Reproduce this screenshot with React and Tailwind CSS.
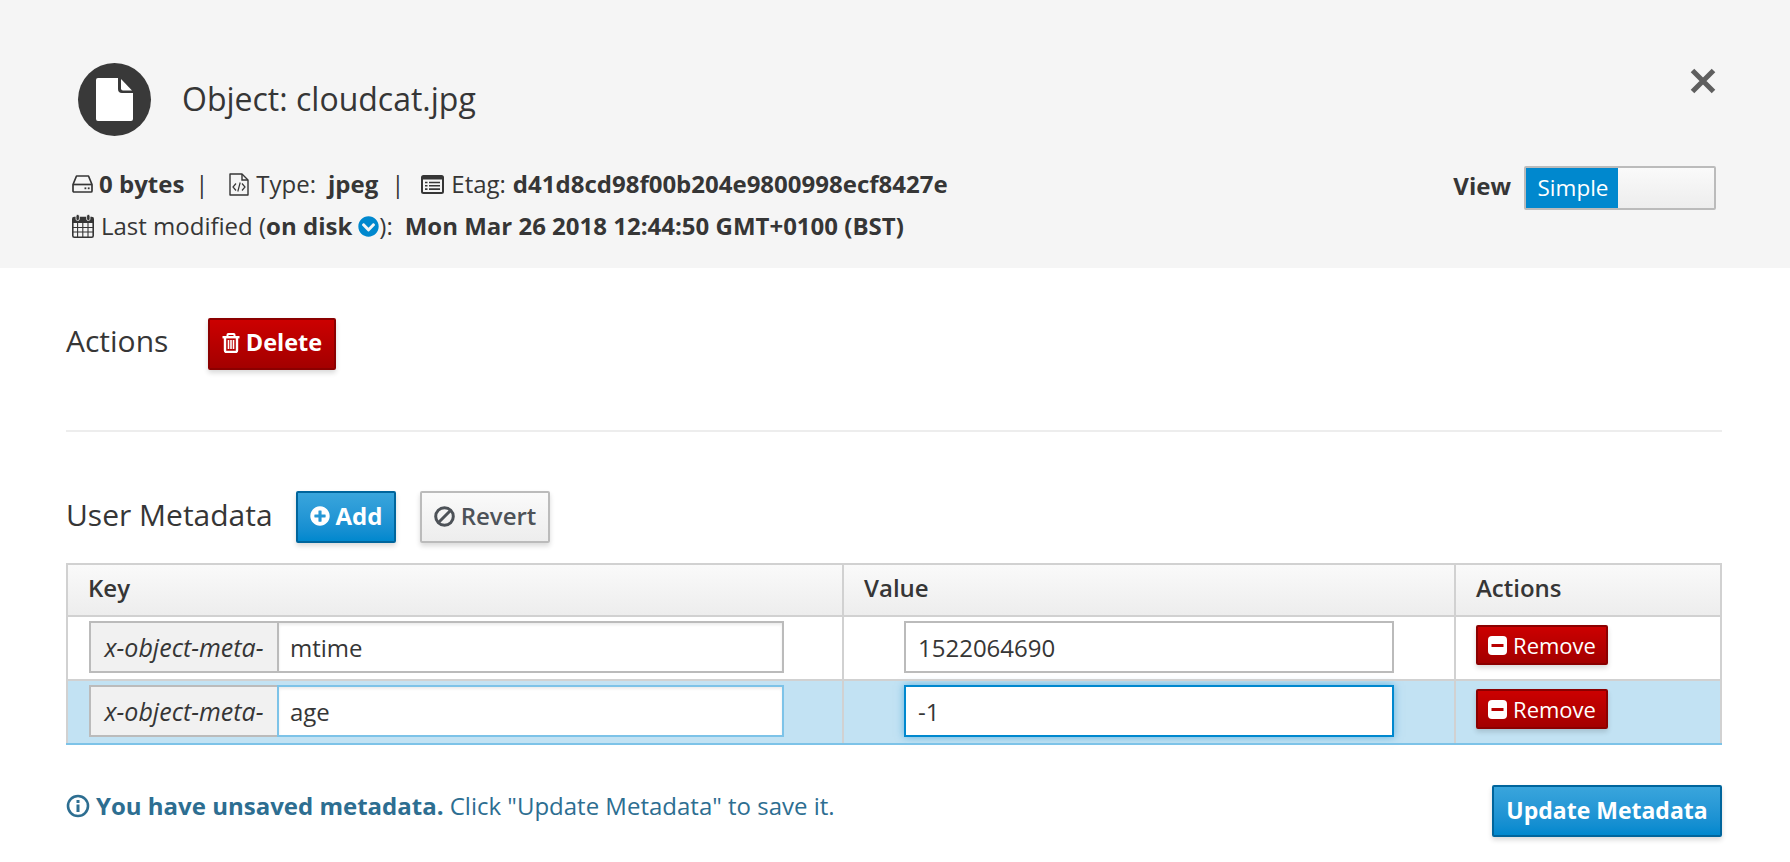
import { FaPlusCircle, FaChevronCircleDown } from "react-icons/fa";

const fontClass = "font-['Open_Sans',sans-serif]";
const redBtn = "bg-gradient-to-b from-[#cc0000] to-[#a30000] border-2 border-[#8b0000] text-white rounded-[2px] shadow-[0_3px_5px_rgba(3,3,3,0.15)]";
const blueBtn = "bg-gradient-to-b from-[#39a5dc] to-[#0088ce] border-2 border-[#00659c] text-white rounded-[2px] shadow-[0_3px_5px_rgba(3,3,3,0.15)]";

function InfoIcon() {
  return (
    <svg viewBox="0 0 24 24" className="w-[24px] h-[24px] shrink-0" fill="none">
      <circle cx="12" cy="12" r="10" stroke="#2d6e91" strokeWidth="2.6" />
      <rect x="10.5" y="10.5" width="3" height="7.5" fill="#2d6e91" />
      <rect x="10.5" y="6" width="3" height="3" fill="#2d6e91" />
    </svg>
  );
}

function DriveIcon() {
  return (
    <svg viewBox="0 0 21 18" className="w-[21px] h-[18px] shrink-0" fill="none" stroke="#363636" strokeWidth="1.7">
      <path d="M4.5 1h12l3.5 8.5V16a1 1 0 0 1-1 1H2a1 1 0 0 1-1-1V9.5z" strokeLinejoin="round" />
      <path d="M1 9.5h19" />
      <rect x="12.5" y="12.4" width="1.8" height="1.8" fill="#363636" stroke="none" />
      <rect x="15.8" y="12.4" width="1.8" height="1.8" fill="#363636" stroke="none" />
    </svg>
  );
}

function FileCodeIcon() {
  return (
    <svg viewBox="0 0 20 23" className="w-[20px] h-[23px] shrink-0" fill="none" stroke="#363636" strokeWidth="1.4">
      <path d="M1 1h12l6 6v15H1z" strokeLinejoin="round" />
      <path d="M13 1v6h6" />
      <path d="M7 10.5l-3 3.5 3 3.5M13 10.5l3 3.5-3 3.5M11.2 9.5l-2.4 9" strokeWidth="1.2" />
    </svg>
  );
}

function ListIcon() {
  return (
    <svg viewBox="0 0 23 19" className="w-[23px] h-[19px] shrink-0" fill="none">
      <rect x="1" y="1" width="21" height="17" rx="1.5" stroke="#363636" strokeWidth="2" />
      <rect x="1" y="1" width="21" height="3.5" fill="#363636" />
      <path d="M4 7.5h2.5M8 7.5h11M4 10.8h2.5M8 10.8h11M4 14.1h2.5M8 14.1h11" stroke="#363636" strokeWidth="1.6" />
    </svg>
  );
}

function CalendarIcon() {
  return (
    <svg viewBox="0 0 22 24" className="w-[22px] h-[24px] shrink-0" fill="none">
      <rect x="0.8" y="3.5" width="20.4" height="19.7" rx="1.5" stroke="#363636" strokeWidth="1.6" />
      <rect x="0.8" y="3.5" width="20.4" height="5.5" fill="#363636" />
      <path d="M5.6 9v14M10.8 9v14M16 9v14M1 13.5h20M1 18h20" stroke="#363636" strokeWidth="1.1" />
      <rect x="4" y="0.5" width="3.4" height="6" rx="1.5" fill="#363636" stroke="#f5f5f5" strokeWidth="0.8" />
      <rect x="14.6" y="0.5" width="3.4" height="6" rx="1.5" fill="#363636" stroke="#f5f5f5" strokeWidth="0.8" />
    </svg>
  );
}

function TrashIcon() {
  return (
    <svg viewBox="0 0 18 20" className="w-[18px] h-[20px] shrink-0" fill="none" stroke="#fff">
      <path d="M0.5 4.200h17" strokeWidth="2.4" />
      <path d="M5.500 4V1.800A.8.8 0 0 1 6.300 1h5.400a.8.8 0 0 1 .8.8V4" strokeWidth="2" />
      <path d="M3 4.500V17.500A1.500 1.500 0 0 0 4.500 19h9a1.500 1.500 0 0 0 1.500-1.500V4.500" strokeWidth="2.400" />
      <path d="M6.500 7v9M9 7v9M11.500 7v9" strokeWidth="1.600" />
    </svg>
  );
}

function BanIcon() {
  return (
    <svg viewBox="0 0 21 21" className="w-[21px] h-[21px] shrink-0" fill="none" stroke="#4d5258" strokeWidth="3">
      <circle cx="10.5" cy="10.5" r="8.8" />
      <path d="M4.5 16.5l12-12" />
    </svg>
  );
}

function MinusIcon() {
  return (
    <svg viewBox="0 0 19 19" className="w-[19px] h-[19px] shrink-0">
      <rect width="19" height="19" rx="4" fill="#fff" />
      <rect x="3.5" y="8" width="12" height="3" fill="#b80000" />
    </svg>
  );
}

function MetaRow({ name, value, selected }) {
  const keyBorder = selected ? "border-[#7dc3e8]" : "border-[#bbbbbb]";
  const valBorder = selected ? "border-[#0088ce] shadow-[0_0_8px_rgba(0,136,206,0.5)]" : "border-[#bbbbbb]";
  const bottom = selected ? "border-b-[#7dc3e8]" : "";
  return (
    <tr className={selected ? "bg-[#c2e2f3]" : "bg-white"}>
      <td className={`border-2 border-[#d1d1d1] pl-[21px] pb-[2px] h-[64px] ${bottom}`}>
        <div className="flex h-[52px] w-[695px]">
          <div className="w-[188px] pt-[2px] bg-[#f1f1f1] border-2 border-[#bbbbbb] border-r-0 flex items-center justify-center italic text-[25px] text-[#363636]">
            x-object-meta-
          </div>
          <div className={`flex-1 pt-[2px] bg-white border-2 ${keyBorder} flex items-center pl-[11px] text-[24px] text-[#363636] shadow-[inset_0_2px_3px_rgba(3,3,3,0.08)]`}>
            {name}
          </div>
        </div>
      </td>
      <td className={`border-2 border-[#d1d1d1] pl-[60px] pb-[2px] ${bottom}`}>
        <div className={`w-[490px] h-[52px] pt-[2px] bg-white border-2 ${valBorder} flex items-center pl-[12px] text-[24px] text-[#363636]`}>
          {value}
        </div>
      </td>
      <td className={`border-2 border-[#d1d1d1] pl-[20px] pb-[6px] ${bottom}`}>
        <button className={`${redBtn} w-[132px] h-[40px] flex items-center justify-center gap-[6px] text-[22px] font-medium`}>
          <MinusIcon />
          Remove
        </button>
      </td>
    </tr>
  );
}

export default function App() {
  return (
    <div className={`${fontClass} w-full min-h-[862px] bg-white text-[#363636] text-[24px] overflow-hidden`}>
      {/* Header */}
      <header className="h-[268px] bg-[#f5f5f5] flex justify-between pr-[74px]">
        <div className="pl-[72px]">
          <div className="flex items-center pt-[63px] pl-[6px]">
            <div className="w-[73px] h-[73px] rounded-full bg-[#393939] flex items-center justify-center">
              <svg viewBox="0 0 37 43" className="w-[37px] h-[43px]">
                <path d="M2 0h20v11a4 4 0 0 0 4 4h11v26a2 2 0 0 1-2 2H2a2 2 0 0 1-2-2V2a2 2 0 0 1 2-2z" fill="#fff" />
                <path d="M25 1l11 11.500H27a2 2 0 0 1-2-2z" fill="#fff" />
              </svg>
            </div>
            <h1 className="ml-[31px] -mt-[2px] text-[32px] leading-[73px] font-normal">Object: cloudcat.jpg</h1>
          </div>
          <div className="mt-[27px] leading-[42px] whitespace-nowrap">
            <div className="flex items-center h-[42px]">
              <DriveIcon />
              <strong className="ml-[6px] font-bold">0 bytes</strong>
              <span className="ml-[11px] w-[34px]">|</span>
              <FileCodeIcon />
              <span className="ml-[7px]">Type:</span>
              <strong className="ml-[12px] font-bold">jpeg</strong>
              <span className="ml-[13px] w-[30px]">|</span>
              <ListIcon />
              <span className="ml-[7px]">Etag:</span>
              <strong className="ml-[7px] font-bold">d41d8cd98f00b204e9800998ecf8427e</strong>
            </div>
            <div className="flex items-center h-[42px]">
              <CalendarIcon />
              <span className="ml-[7px]">Last modified (</span>
              <strong className="font-bold">on disk</strong>
              <FaChevronCircleDown className="ml-[6px] w-[21px] h-[21px] text-[#0088ce]" />
              <span>):</span>
              <strong className="ml-[12px] font-bold">Mon Mar 26 2018 12:44:50 GMT+0100 (BST)</strong>
            </div>
          </div>
        </div>
        <div className="flex flex-col items-end">
          <svg viewBox="0 0 26 26" className="mt-[68px] w-[26px] h-[26px]">
            <path d="M2.5 2.5l21 21M23.5 2.5l-21 21" stroke="#5f5f5f" strokeWidth="5" />
          </svg>
          <div className="mt-[72px] flex items-center">
            <span className="font-bold mr-[13px] -mt-[4px]">View</span>
            <div className="w-[192px] h-[44px] border-2 border-[#bbbbbb] rounded-[2px] flex">
              <div className="w-[92px] pl-[2px] bg-[#0088ce] text-white flex items-center justify-center font-medium text-[22.5px]">Simple</div>
              <div className="flex-1 bg-gradient-to-b from-[#fafafa] to-[#ededed]" />
            </div>
          </div>
        </div>
      </header>

      {/* Content */}
      <main className="pl-[66px] pr-[68px]">
        <section className="pt-[50px] flex items-center h-[102px]">
          <h2 className="w-[142px] text-[30px] font-normal -mt-[8px]">Actions</h2>
          <button className={`${redBtn} w-[128px] h-[52px] pb-[2px] flex items-center justify-center gap-[6px] text-[23.5px] font-bold`}>
            <TrashIcon />
            Delete
          </button>
        </section>
        <hr className="mt-[60px] border-0 h-[2px] bg-[#ededed]" />
        <section className="mt-[59px] flex items-center h-[52px]">
          <h2 className="w-[230px] text-[30px] font-normal -mt-[6px]">User Metadata</h2>
          <button className={`${blueBtn} w-[100px] h-[52px] pb-[2px] flex items-center justify-center gap-[6px] font-bold`}>
            <FaPlusCircle className="w-[20px] h-[20px]" />
            Add
          </button>
          <button className="ml-[24px] w-[130px] h-[52px] pb-[2px] flex items-center justify-center gap-[6px] font-semibold text-[#4d5258] bg-gradient-to-b from-[#fafafa] to-[#ededed] border-2 border-[#bbbbbb] rounded-[2px] shadow-[0_3px_5px_rgba(3,3,3,0.15)]">
            <BanIcon />
            Revert
          </button>
        </section>

        <table className="mt-[20px] w-full table-fixed border-collapse">
          <colgroup>
            <col className="w-[776px]" />
            <col className="w-[612px]" />
            <col />
          </colgroup>
          <thead>
            <tr className="bg-gradient-to-b from-[#fafafa] to-[#ededed] h-[52px]">
              <th className="border-2 border-[#d1d1d1] text-left pl-[20px] pb-[4px] font-semibold">Key</th>
              <th className="border-2 border-[#d1d1d1] text-left pl-[20px] pb-[4px] font-semibold">Value</th>
              <th className="border-2 border-[#d1d1d1] text-left pl-[20px] pb-[4px] font-semibold">Actions</th>
            </tr>
          </thead>
          <tbody>
            <MetaRow name="mtime" value="1522064690" />
            <MetaRow name="age" value="-1" selected />
          </tbody>
        </table>

        <div className="mt-[40px] flex justify-between items-start">
          <div className="flex items-center gap-[6px] mt-[3px] text-[#2d6e91]">
            <InfoIcon />
            <span><strong className="font-bold">You have unsaved metadata.</strong> Click "Update Metadata" to save it.</span>
          </div>
          <button className={`${blueBtn} w-[230px] h-[52px] pb-[2px] font-bold text-[23px]`}>Update Metadata</button>
        </div>
      </main>
    </div>
  );
}
